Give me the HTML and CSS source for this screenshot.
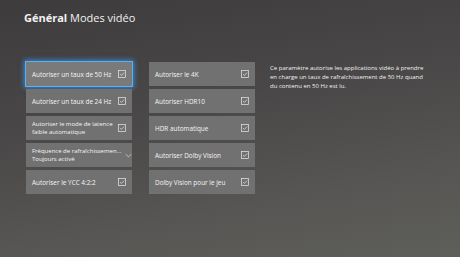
FILE: index.html
```html
<!DOCTYPE html>
<html lang="fr">
<head>
    <meta charset="UTF-8">
    <meta name="viewport" content="width=device-width, initial-scale=1.0">
    <title>Modes vidéo</title>
    <link rel="stylesheet" href="styles.css">
</head>
<body>
    <h1 class="title"><b>Général</b> Modes vidéo</h1>

    <div class="content">
        <div class="grid">
            <!-- colonne de gauche -->
            <div class="tile focused">
                <span>Autoriser un taux de 50 Hz</span>
                <svg class="check" viewBox="0 0 10 10"><rect x="0.5" y="0.5" width="9" height="9"/><path d="M2.6 5.2 L4.3 6.8 L7.6 3.2"/></svg>
            </div>
            <div class="tile">
                <span>Autoriser le 4K</span>
                <svg class="check" viewBox="0 0 10 10"><rect x="0.5" y="0.5" width="9" height="9"/><path d="M2.6 5.2 L4.3 6.8 L7.6 3.2"/></svg>
            </div>

            <div class="tile">
                <span>Autoriser un taux de 24 Hz</span>
                <svg class="check" viewBox="0 0 10 10"><rect x="0.5" y="0.5" width="9" height="9"/><path d="M2.6 5.2 L4.3 6.8 L7.6 3.2"/></svg>
            </div>
            <div class="tile">
                <span>Autoriser HDR10</span>
                <svg class="check" viewBox="0 0 10 10"><rect x="0.5" y="0.5" width="9" height="9"/><path d="M2.6 5.2 L4.3 6.8 L7.6 3.2"/></svg>
            </div>

            <div class="tile">
                <span class="small">Autoriser le mode de latence<br>faible automatique</span>
                <svg class="check" viewBox="0 0 10 10"><rect x="0.5" y="0.5" width="9" height="9"/><path d="M2.6 5.2 L4.3 6.8 L7.6 3.2"/></svg>
            </div>
            <div class="tile">
                <span>HDR automatique</span>
                <svg class="check" viewBox="0 0 10 10"><rect x="0.5" y="0.5" width="9" height="9"/><path d="M2.6 5.2 L4.3 6.8 L7.6 3.2"/></svg>
            </div>

            <div class="tile">
                <span class="small">Fréquence de rafraîchissemen...<br>Toujours activé</span>
                <svg class="chevron" viewBox="0 0 10 6"><path d="M1 1 L5 5 L9 1"/></svg>
            </div>
            <div class="tile">
                <span>Autoriser Dolby Vision</span>
                <svg class="check" viewBox="0 0 10 10"><rect x="0.5" y="0.5" width="9" height="9"/><path d="M2.6 5.2 L4.3 6.8 L7.6 3.2"/></svg>
            </div>

            <div class="tile">
                <span>Autoriser le YCC 4:2:2</span>
                <svg class="check" viewBox="0 0 10 10"><rect x="0.5" y="0.5" width="9" height="9"/><path d="M2.6 5.2 L4.3 6.8 L7.6 3.2"/></svg>
            </div>
            <div class="tile">
                <span>Dolby Vision pour le jeu</span>
                <svg class="check" viewBox="0 0 10 10"><rect x="0.5" y="0.5" width="9" height="9"/><path d="M2.6 5.2 L4.3 6.8 L7.6 3.2"/></svg>
            </div>
        </div>

        <p class="description">Ce paramètre autorise les applications vidéo à prendre en charge un taux de rafraîchissement de 50 Hz quand du contenu en 50 Hz est lu.</p>
    </div>
</body>
</html>
```

FILE: styles.css
```css
html, body {
    height: 100%;
}

body {
    font-family: "Open Sans", "Noto Sans", sans-serif;
    background: linear-gradient(170deg, #3d3b3b 0%, #494747 40%, #575654 75%, #5e5e5a 100%);
    color: #fff;
    margin: 0;
    padding: 0;
}

.title {
    font-size: 11px;
    font-weight: normal;
    margin: 0;
    padding: 10px 0 0 24px;
    line-height: 15px;
    color: #f2f2f2;
}

.title b {
    font-weight: bold;
}

.content {
    display: flex;
    align-items: flex-start;
    padding: 37px 0 0 26px;
}

.grid {
    display: grid;
    grid-template-columns: 106px 106px;
    grid-auto-rows: 24px;
    column-gap: 17px;
    row-gap: 3px;
}

.tile {
    display: flex;
    align-items: center;
    justify-content: space-between;
    gap: 4px;
    background-color: #727171;
    padding: 0 6px 0 6px;
    font-size: 6.4px;
    line-height: 9px;
    color: #f4f4f4;
    white-space: nowrap;
}

.tile .small {
    font-size: 6px;
    line-height: 8.5px;
}

.tile.focused {
    background-color: #7b7a7a;
    outline: 1.5px solid #4fb4ff;
    box-shadow: 0 0 5px 2px rgba(60, 160, 255, 0.7);
}

.check {
    width: 8px;
    height: 8px;
    flex: none;
    fill: none;
    stroke: #e6e6e6;
    stroke-width: 0.9;
}

.chevron {
    width: 7px;
    height: 5px;
    flex: none;
    fill: none;
    stroke: #dcdcdc;
    stroke-width: 1;
}

.description {
    margin: 2px 0 0 15px;
    width: 160px;
    font-size: 6px;
    line-height: 9px;
    color: #f2f2f2;
}
```
